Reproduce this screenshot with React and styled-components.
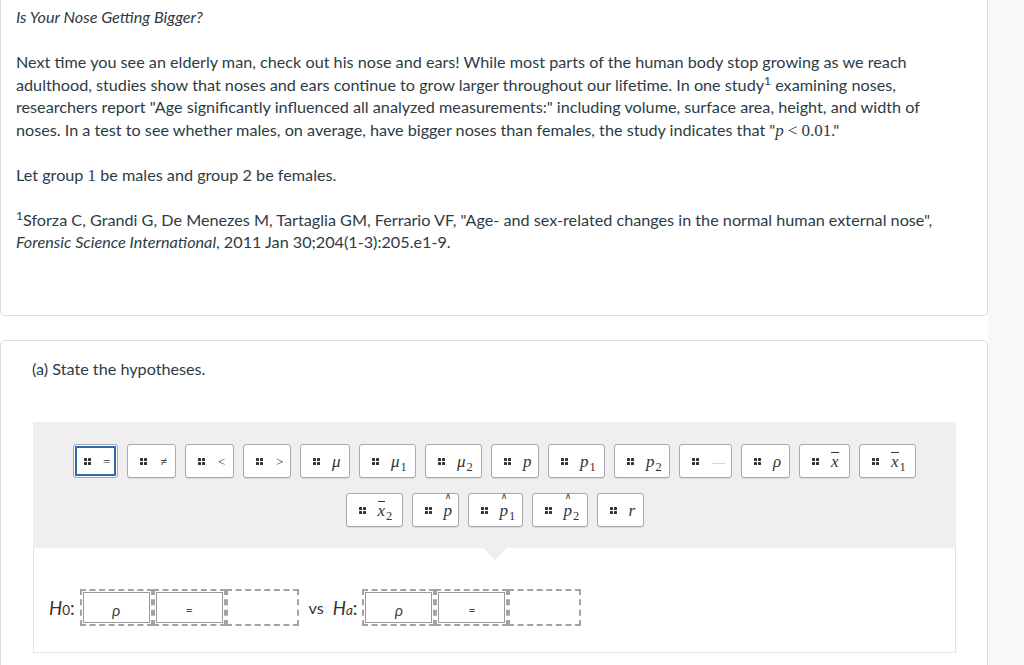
import React from "react";
import styled, { createGlobalStyle } from "styled-components";

const Global = createGlobalStyle`
  html, body { margin: 0; padding: 0; background: #fff; }
  body { font-family: Lato, "Open Sans", sans-serif; color: #2d3b45; }
`;

const Page = styled.div`
  display: flex;
  width: 1024px;
  height: 665px;
  overflow: hidden;
`;

const Main = styled.div`
  width: 988px;
  flex: none;
  display: flex;
  flex-direction: column;
`;

const Side = styled.div`
  flex: 1;
  background: #f8f8f8;
`;

const Card = styled.div`
  box-sizing: border-box;
  border: 1px solid #dcdcdc;
  border-top: ${(p) => (p.$cut ? "none" : "1px solid #dcdcdc")};
  border-radius: ${(p) => (p.$cut ? "0 0 5px 5px" : "5px 5px 0 0")};
  margin-top: ${(p) => (p.$cut ? "0" : "24px")};
  padding: ${(p) => (p.$cut ? "6px 32px 61px 15px" : "17px 31px 40px 31px")};
  flex: none;
`;

const Para = styled.p`
  margin: 0 0 22.5px;
  font-size: 16.2px;
  line-height: 22.5px;
  &:last-child { margin-bottom: 0; }
`;

const Sup = styled.sup`
  font-size: 12px;
  line-height: 0;
  vertical-align: 6px;
`;

const MathI = styled.span`
  font-family: "Liberation Serif", "DejaVu Serif", serif;
  font-style: ${(p) => (p.$up ? "normal" : "italic")};
  font-size: 17px;
  line-height: 0;
  margin: ${(p) => (p.$rel ? "0 4px" : "0")};
`;

const Heading = styled.div`
  font-size: 16.2px;
  line-height: 22.5px;
  margin-bottom: 42px;
`;

const Widget = styled.div`
  display: flex;
  flex-direction: column;
  margin-left: 1px;
  width: 923px;
`;

const Palette = styled.div`
  position: relative;
  background: #efefef;
  padding: 22px 30px 21px;
  display: flex;
  flex-wrap: wrap;
  justify-content: center;
  row-gap: 15px;
  column-gap: 9px;
  &::after {
    content: "";
    position: absolute;
    left: 50%;
    bottom: -12px;
    margin-left: -12px;
    border-left: 12px solid transparent;
    border-right: 12px solid transparent;
    border-top: 12px solid #efefef;
  }
`;

const Tile = styled.div`
  box-sizing: border-box;
  width: ${(p) => p.$w}px;
  height: 34px;
  background: #fff;
  border: 1px solid #a9a9a9;
  border-radius: 3px;
  box-shadow: ${(p) =>
    p.$sel ? "inset 0 0 0 1px #fff, inset 0 0 0 3px #3269ab" : "0 1px 0 rgba(0,0,0,0.08)"};
  display: flex;
  align-items: center;
  padding-left: ${(p) => (p.$sel ? 10 : 12)}px;
  gap: ${(p) => (p.$gap ?? 11)}px;
`;

const Handle = styled.span`
  display: grid;
  grid-template-columns: 3px 3px;
  grid-template-rows: 3px 3px;
  gap: 1px;
  flex: none;
  & > i {
    display: block;
    background: #333;
    border-radius: 0.5px;
  }
`;

const Sym = styled.span`
  font-family: "Liberation Serif", "DejaVu Serif", serif;
  font-style: ${(p) => (p.$op ? "normal" : "italic")};
  font-size: ${(p) => (p.$op ? 13 : 17)}px;
  color: ${(p) => (p.$light ? "#bbb" : "#333")};
  line-height: 1;
  display: inline-flex;
  align-items: baseline;
  white-space: nowrap;
`;

const Sub = styled.span`
  font-style: normal;
  font-size: 12.5px;
  margin-left: 1px;
  position: relative;
  top: 4px;
`;

const Bar = styled.span`
  border-top: 1px solid #333;
  padding-top: 1px;
  line-height: 0.9;
`;

const Hat = styled.span`
  position: relative;
  display: inline-block;
  & > b {
    position: absolute;
    left: 50%;
    top: -10px;
    transform: translateX(-45%);
    font-weight: normal;
    font-style: normal;
    font-size: 9px;
  }
`;

const Answer = styled.div`
  border: 1px solid #e3e3e3;
  border-top: none;
  padding: 41px 15px 26px;
  display: flex;
  align-items: center;
  font-size: 16.2px;
  color: #333;
`;

const HLabel = styled.span`
  font-family: Lato, sans-serif;
  font-size: 18.5px;
  display: inline-flex;
  align-items: baseline;
  & > i { font-style: italic; }
  & > sub { font-size: 13.5px; vertical-align: -3px; line-height: 0; }
`;

const Group = styled.div`
  display: flex;
  margin-left: 5px;
`;

const Slot = styled.div`
  box-sizing: border-box;
  width: 73px;
  height: 37px;
  border: 2px dashed #a3a3a3;
  padding: 1px;
  display: flex;
`;

const Filled = styled.div`
  flex: 1;
  background: #fff;
  border: 1px solid #9a9a9a;
  display: flex;
  align-items: center;
  justify-content: center;
  font-size: ${(p) => (p.$op ? 12 : 16)}px;
  font-style: ${(p) => (p.$op ? "normal" : "italic")};
  color: #444;
  padding-top: 4px;
`;

const Vs = styled.span`
  font-size: 16.2px;
  margin: 0 9px 0 10px;
`;

const H = () => (
  <Handle>
    <i />
    <i />
    <i />
    <i />
  </Handle>
);

const row1 = [
  { w: 45, s: <Sym $op>=</Sym>, sel: true, gap: 12 },
  { w: 49, s: <Sym $op>≠</Sym>, gap: 13 },
  { w: 49, s: <Sym $op>&lt;</Sym>, gap: 13 },
  { w: 48, s: <Sym $op>&gt;</Sym>, gap: 13 },
  { w: 50, s: <Sym>μ</Sym>, gap: 12 },
  { w: 57, s: <Sym>μ<Sub>1</Sub></Sym>, gap: 12 },
  { w: 57, s: <Sym>μ<Sub>2</Sub></Sym>, gap: 12 },
  { w: 48, s: <Sym>p</Sym>, gap: 12 },
  { w: 57, s: <Sym>p<Sub>1</Sub></Sym>, gap: 12 },
  { w: 56, s: <Sym>p<Sub>2</Sub></Sym>, gap: 12 },
  { w: 53, s: <Sym $op $light>—</Sym>, gap: 13 },
  { w: 49, s: <Sym>ρ</Sym>, gap: 12 },
  { w: 51, s: <Sym><Bar>x</Bar></Sym>, gap: 12 },
  { w: 57, s: <Sym><Bar>x</Bar><Sub>1</Sub></Sym>, gap: 12 },
];

const row2 = [
  { w: 57, s: <Sym><Bar>x</Bar><Sub>2</Sub></Sym>, gap: 12 },
  { w: 47, s: <Sym><Hat><b>∧</b>p</Hat></Sym>, gap: 12 },
  { w: 55, s: <Sym><Hat><b>∧</b>p</Hat><Sub>1</Sub></Sym>, gap: 12 },
  { w: 56, s: <Sym><Hat><b>∧</b>p</Hat><Sub>2</Sub></Sym>, gap: 12 },
  { w: 47, s: <Sym>r</Sym>, gap: 12 },
];

const Hyp = () => (
  <Group>
    <Slot>
      <Filled>ρ</Filled>
    </Slot>
    <Slot>
      <Filled $op>=</Filled>
    </Slot>
    <Slot />
  </Group>
);

export default function App() {
  return (
    <>
      <Global />
      <Page>
        <Main>
          <Card $cut>
            <Para>
              <i>Is Your Nose Getting Bigger?</i>
            </Para>
            <Para>
              Next time you see an elderly man, check out his nose and ears! While most parts of the
              human body stop growing as we reach adulthood, studies show that noses and ears continue
              to grow larger throughout our lifetime. In one study<Sup>1</Sup> examining noses,
              researchers report "Age significantly influenced all analyzed measurements:" including
              volume, surface area, height, and width of noses. In a test to see whether males, on
              average, have bigger noses than females, the study indicates that "<MathI>p</MathI>
              <MathI $up $rel>&lt;</MathI>
              <MathI $up>0.01</MathI>."
            </Para>
            <Para>
              Let group <MathI $up>1</MathI> be males and group 2 be females.
            </Para>
            <Para>
              <Sup>1</Sup>Sforza C, Grandi G, De Menezes M, Tartaglia GM, Ferrario VF, "Age- and
              sex-related changes in the normal human external nose",
              <br />
              <i>Forensic Science International</i>, 2011 Jan 30;204(1-3):205.e1-9.
            </Para>
          </Card>
          <Card>
            <Heading>(a) State the hypotheses.</Heading>
            <Widget>
              <Palette>
                {[...row1, ...row2].map((t, i) => (
                  <Tile key={i} $w={t.w} $sel={t.sel} $gap={t.gap}>
                    <H />
                    {t.s}
                  </Tile>
                ))}
              </Palette>
              <Answer>
                <HLabel>
                  <i>H</i>
                  <sub>0</sub>:
                </HLabel>
                <Hyp />
                <Vs>vs</Vs>
                <HLabel>
                  <i>H</i>
                  <sub>
                    <i>a</i>
                  </sub>
                  :
                </HLabel>
                <Hyp />
              </Answer>
            </Widget>
          </Card>
        </Main>
        <Side />
      </Page>
    </>
  );
}
